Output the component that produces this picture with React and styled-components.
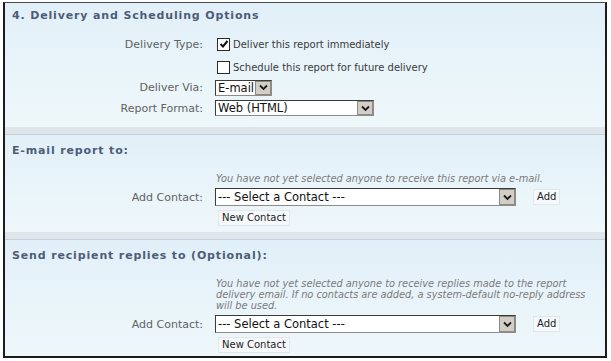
import styled, { createGlobalStyle } from "styled-components";

const GlobalStyle = createGlobalStyle`
  body {
    margin: 0;
    background: #ffffff;
    font-family: "DejaVu Sans", Verdana, sans-serif;
  }
`;

export default function App() {
  return (
    <>
      <GlobalStyle />
      <Frame>
        <Section $pt={6} $pb={7}>
          <Title>4. Delivery and Scheduling Options</Title>
          <Rows $mt={10}>
            <Row $h={22}>
              <Label>Delivery Type:</Label>
              <Option>
                <CheckBox>
                  <svg width="10" height="10" viewBox="0 0 10 10">
                    <path d="M1.5 5 L4 7.5 L8.5 2" fill="none" stroke="#111" strokeWidth="2" />
                  </svg>
                </CheckBox>
                Deliver this report immediately
              </Option>
            </Row>
            <Row $h={24}>
              <span />
              <Option>
                <CheckBox />
                Schedule this report for future delivery
              </Option>
            </Row>
            <Row $h={17}>
              <Label>Deliver Via:</Label>
              <Select value="E-mail" width={55} />
            </Row>
            <Row $h={24}>
              <Label>Report Format:</Label>
              <Select value="Web (HTML)" width={157} />
            </Row>
          </Rows>
        </Section>
        <Divider />
        <Section $pt={9} $pb={6}>
          <Title>E-mail report to:</Title>
          <ContactBlock note="You have not yet selected anyone to receive this report via e-mail." />
        </Section>
        <Divider />
        <Section $pt={9} $pb={3}>
          <Title>Send recipient replies to (Optional):</Title>
          <ContactBlock note="You have not yet selected anyone to receive replies made to the report delivery email. If no contacts are added, a system-default no-reply address will be used." />
        </Section>
      </Frame>
    </>
  );
}

function Select({ value, width, tall }) {
  return (
    <SelectBox style={{ width }} $tall={tall}>
      <SelectText>{value}</SelectText>
      <Arrow>
        <svg width="9" height="7" viewBox="0 0 9 7">
          <path d="M1 1.5 L4.5 5 L8 1.5" fill="none" stroke="#1b1b1b" strokeWidth="1.8" />
        </svg>
      </Arrow>
    </SelectBox>
  );
}

function ContactBlock({ note }) {
  return (
    <Rows $mt={15}>
      <Row>
        <span />
        <Note>{note}</Note>
      </Row>
      <Row $h={18} $mt={4}>
        <Label>Add Contact:</Label>
        <Controls>
          <Select value="--- Select a Contact ---" width={299} tall />
          <Button $ml={17}>Add</Button>
        </Controls>
      </Row>
      <Row $mt={4}>
        <span />
        <ButtonLine>
          <Button $ml={3}>New Contact</Button>
        </ButtonLine>
      </Row>
    </Rows>
  );
}

const Frame = styled.div`
  margin: 2px 4px 0 3px;
  width: 600px;
  border: 2px solid #1c1c1c;
  border-top: 1px solid #4a4a4a;
  display: flex;
  flex-direction: column;
`;

const Section = styled.div`
  padding: ${(p) => p.$pt}px 0 ${(p) => p.$pb}px 7px;
  background: linear-gradient(180deg, #e1eff8 0%, #eaf5fa 60%, #eef7fa 100%);
`;

const Divider = styled.div`
  height: 7px;
  background: #dfe6eb;
  border-bottom: 1px solid #c3d1db;
`;

const Title = styled.div`
  font-size: 11px;
  line-height: 14px;
  font-weight: bold;
  color: #4d5c79;
  letter-spacing: 0.85px;
`;

const Rows = styled.div`
  margin-top: ${(p) => p.$mt || 0}px;
  display: flex;
  flex-direction: column;
`;

const Row = styled.div`
  display: grid;
  grid-template-columns: 191px 1fr;
  column-gap: 12px;
  align-items: center;
  min-height: ${(p) => p.$h || 0}px;
  margin-top: ${(p) => p.$mt || 0}px;
`;

const Label = styled.div`
  text-align: right;
  font-size: 11px;
  color: #626262;
`;

const Option = styled.label`
  display: flex;
  align-items: center;
  gap: 3px;
  font-size: 10px;
  color: #3a3a3a;
  margin-left: 2px;
`;

const CheckBox = styled.span`
  width: 11px;
  height: 11px;
  border: 1px solid #2a2a2a;
  background: #ffffff;
  display: flex;
  align-items: center;
  justify-content: center;
`;

const SelectBox = styled.div`
  height: ${(p) => (p.$tall ? 16 : 14)}px;
  display: flex;
  align-items: stretch;
  background: #ffffff;
  border: 1px solid #8c8c8c;
  border-top-color: #3a3a3a;
  border-left-color: #3a3a3a;
  box-sizing: content-box;
`;

const SelectText = styled.div`
  flex: 1;
  display: flex;
  align-items: center;
  font-size: 11.5px;
  color: #111;
  padding-left: 2px;
  white-space: nowrap;
  overflow: hidden;
`;

const Arrow = styled.div`
  width: 14px;
  background: #d2cec6;
  border: 1px solid #8d8a84;
  display: flex;
  align-items: center;
  justify-content: center;
`;

const Controls = styled.div`
  display: flex;
  align-items: center;
`;

const ButtonLine = styled.div`
  display: flex;
`;

const Button = styled.div`
  margin-left: ${(p) => p.$ml || 0}px;
  font-size: 10px;
  line-height: 12px;
  padding: 1px 3px;
  color: #222;
  background: #f5f9fb;
  border: 1px solid #e1e8ec;
`;

const Note = styled.div`
  font-size: 9.8px;
  line-height: 11px;
  font-style: italic;
  color: #7a7a7a;
  max-width: 372px;
  margin-left: 1px;
`;
